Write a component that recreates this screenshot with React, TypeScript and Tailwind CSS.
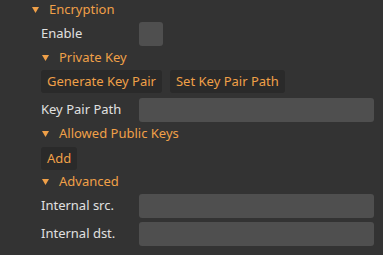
const orange = "text-[#f0a048]";

function Caret() {
  return (
    <svg width="7" height="6" viewBox="0 0 7 6" className="shrink-0">
      <polygon points="0,0 7,0 3.5,6" fill="#f0a048" />
    </svg>
  );
}

function Header({ label, indent, className = "" }: { label: string; indent: string; className?: string }) {
  return (
    <div className={`flex items-center gap-[10px] ${indent} ${className}`}>
      <Caret />
      <span className={orange}>{label}</span>
    </div>
  );
}

function Field({ label, className = "" }: { label: string; className?: string }) {
  return (
    <div className={`flex items-center h-[24px] pl-[41px] pr-[9px] ${className}`}>
      <span className="w-[98px] shrink-0 text-[#e0e0e0]">{label}</span>
      <div className="flex-1 h-[24px] rounded-[3px] bg-[#4f4f4f]" />
    </div>
  );
}

function Btn({ label, className = "" }: { label: string; className?: string }) {
  return (
    <button className={`h-[23px] px-[6px] rounded-[3px] bg-[#2a2a2a] ${orange} leading-none ${className}`}>
      {label}
    </button>
  );
}

export default function App() {
  return (
    <div
      className="w-[383px] h-[255px] bg-[#333333] overflow-hidden flex flex-col text-[13px]"
      style={{ fontFamily: '"Noto Sans", sans-serif' }}
    >
      <Header label="Encryption" indent="pl-[32px]" className="h-[20px]" />
      <div className="flex items-center h-[24px] mt-[2px] pl-[41px]">
        <span className="w-[98px] shrink-0 text-[#e0e0e0]">Enable</span>
        <div className="w-[24px] h-[24px] rounded-[3px] bg-[#4f4f4f]" />
      </div>
      <Header label="Private Key" indent="pl-[42px]" className="h-[24px]" />
      <div className="flex gap-[8px] pl-[41px]">
        <Btn label="Generate Key Pair" />
        <Btn label="Set Key Pair Path" />
      </div>
      <Field label="Key Pair Path" className="mt-[5px]" />
      <Header label="Allowed Public Keys" indent="pl-[42px]" className="h-[24px]" />
      <div className="flex pl-[41px] mt-[1px]">
        <Btn label="Add" />
      </div>
      <Header label="Advanced" indent="pl-[42px]" className="h-[24px]" />
      <Field label="Internal src." />
      <Field label="Internal dst." className="mt-[4px]" />
    </div>
  );
}
